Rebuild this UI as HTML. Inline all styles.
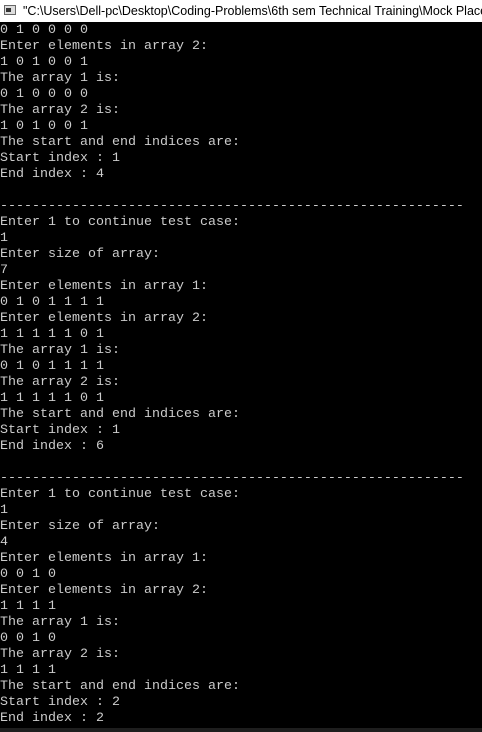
<!DOCTYPE html>
<html><head><style>
html,body{margin:0;padding:0;width:482px;height:732px;overflow:hidden;background:#000;}
#t{position:absolute;left:0;top:0;width:482px;height:22px;background:#fff;font:12.5px "Liberation Sans",sans-serif;color:#000;white-space:nowrap;overflow:hidden;}
#t span{position:absolute;left:23px;top:4px;}
#ic{position:absolute;left:4px;top:5px;width:12px;height:10px;border:1px solid #666;background:#ddd;box-sizing:border-box;}
#ic:after{content:"";position:absolute;left:1px;top:2px;width:5px;height:4px;background:#333;}
pre{position:absolute;left:0;top:23px;margin:0;font:13.33px/16px "Liberation Mono",monospace;color:#cccccc;}
#b{position:absolute;left:0;top:728px;width:482px;height:4px;background:#1e1e1e;}
</style></head><body>
<div id="t"><div id="ic"></div><span>"C:\Users\Dell-pc\Desktop\Coding-Problems\6th sem Technical Training\Mock Placement</span></div>
<pre>0 1 0 0 0 0
Enter elements in array 2:
1 0 1 0 0 1
The array 1 is:
0 1 0 0 0 0
The array 2 is:
1 0 1 0 0 1
The start and end indices are:
Start index : 1
End index : 4

----------------------------------------------------------
Enter 1 to continue test case:
1
Enter size of array:
7
Enter elements in array 1:
0 1 0 1 1 1 1
Enter elements in array 2:
1 1 1 1 1 0 1
The array 1 is:
0 1 0 1 1 1 1
The array 2 is:
1 1 1 1 1 0 1
The start and end indices are:
Start index : 1
End index : 6

----------------------------------------------------------
Enter 1 to continue test case:
1
Enter size of array:
4
Enter elements in array 1:
0 0 1 0
Enter elements in array 2:
1 1 1 1
The array 1 is:
0 0 1 0
The array 2 is:
1 1 1 1
The start and end indices are:
Start index : 2
End index : 2</pre>
<div id="b"></div>
</body></html>
